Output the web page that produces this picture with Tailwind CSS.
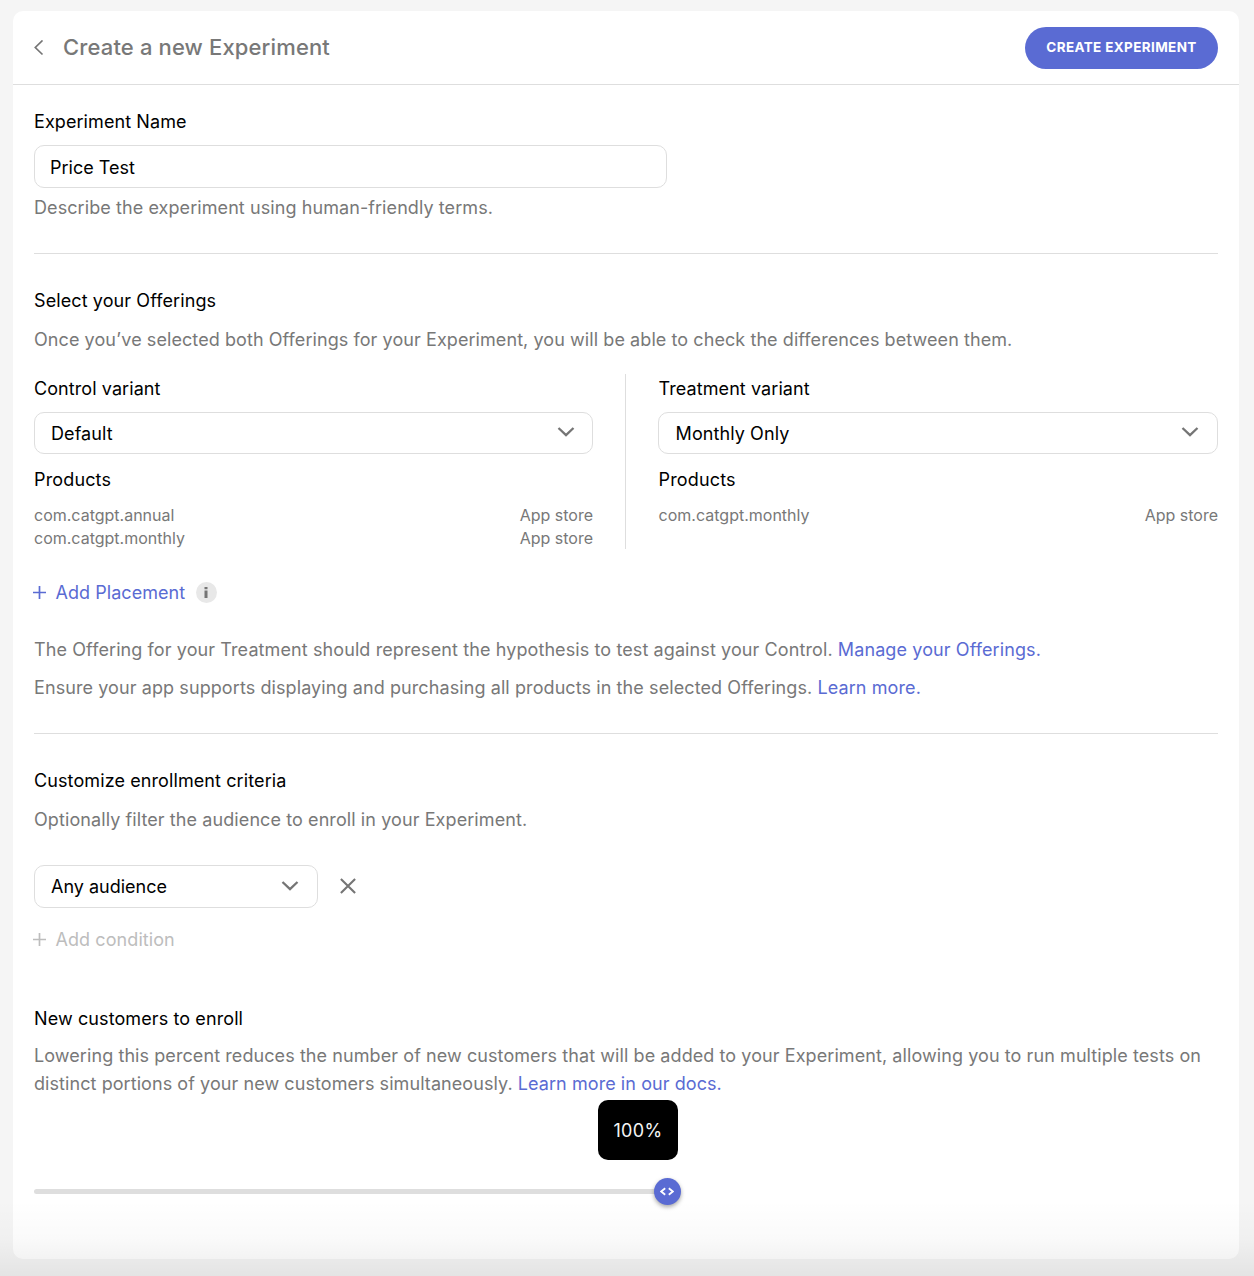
<!DOCTYPE html>
<html lang="en">
<head>
<meta charset="utf-8">
<title>Create a new Experiment</title>
<script src="https://cdn.jsdelivr.net/npm/@tailwindcss/browser@4"></script>
</head>
<body class="relative h-[1276px] overflow-hidden bg-[#f5f5f5] px-[13px] pt-[11px] font-['Inter',sans-serif] text-[18px] leading-7 tracking-[0.08px] text-black">
<main class="mr-[2px] h-[1248px] rounded-[10px] bg-white">
  <header class="flex h-[74px] items-center border-b border-[#dedede] px-[21px]">
    <svg class="mr-[19px] h-4 w-[10px]" viewBox="0 0 10 16" fill="none" stroke="#757575" stroke-width="1.7"><path d="M8.5 .5 1.3 7.500l7.200 7"/></svg>
    <h1 class="flex-1 whitespace-nowrap pb-[2px] text-[22px] font-medium tracking-[0.14px] text-[#787878]">Create a new Experiment</h1>
    <button class="h-[42px] w-[193px] whitespace-nowrap rounded-full bg-[#5a6bd3] pb-[2px] text-[13.5px] font-bold tracking-[0.36px] text-white">CREATE EXPERIMENT</button>
  </header>
  <div class="px-[21px]">
    <section class="h-[169px] border-b border-[#dedede] pt-[23px]">
      <label class="block">Experiment Name</label>
      <div class="mt-[9px] flex h-[43px] w-[633px] items-center rounded-[10px] border border-[#dedede] px-[15px] pt-[2px] tracking-normal">Price Test</div>
      <p class="mt-[6px] text-[#787878]">Describe the experiment using human-friendly terms.</p>
    </section>

    <section class="h-[480px] border-b border-[#dedede] pt-[33px]">
      <h2 class="tracking-[0.1px]">Select your Offerings</h2>
      <p class="mt-[11px] whitespace-nowrap tracking-[0.075px] text-[#787878]">Once you’ve selected both Offerings for your Experiment, you will be able to check the differences between them.</p>
      <div class="mt-[20px] flex h-[175px]">
        <div class="w-[592px] border-r border-[#dedede] pr-[32px] pt-[1px]">
          <h3>Control variant</h3>
          <div class="mt-[9px] flex h-[42px] items-center justify-between rounded-[10px] border border-[#dedede] px-4 pt-[2px]">Default
            <svg class="-mt-[4px] mr-[1px] h-[10px] w-[18px]" viewBox="0 0 18 10" fill="none" stroke="#757575" stroke-width="2.3"><path d="m1.5 1 7.5 7.2L16.5 1"/></svg>
          </div>
          <h3 class="mt-[12px] tracking-[0.15px]">Products</h3>
          <div class="mt-[10px] text-[16px] leading-[23px] tracking-normal text-[#787878]">
            <div class="flex justify-between"><span>com.catgpt.annual</span><span>App store</span></div>
            <div class="flex justify-between"><span>com.catgpt.monthly</span><span>App store</span></div>
          </div>
        </div>
        <div class="flex-1 pl-[32px] pt-[1px]">
          <h3 class="pl-[0.6px]">Treatment variant</h3>
          <div class="mt-[9px] flex h-[42px] items-center justify-between rounded-[10px] border border-[#dedede] pl-[16.6px] pr-4 pt-[2px]">Monthly Only
            <svg class="-mt-[4px] mr-[2px] h-[10px] w-[18px]" viewBox="0 0 18 10" fill="none" stroke="#757575" stroke-width="2.3"><path d="m1.5 1 7.5 7.2L16.5 1"/></svg>
          </div>
          <h3 class="mt-[12px] pl-[0.6px] tracking-[0.15px]">Products</h3>
          <div class="mt-[10px] flex justify-between pl-[0.6px] text-[16px] leading-[23px] tracking-normal text-[#787878]"><span>com.catgpt.monthly</span><span>App store</span></div>
        </div>
      </div>
      <div class="mt-[30px] flex h-7 items-center text-[#5a6bd3]">
        <svg class="-ml-[1px] -mt-[2px] mr-[9.5px] h-[13px] w-[13px]" viewBox="0 0 13 13" fill="none" stroke="#5a6bd3" stroke-width="1.7"><path d="M6.5 0v13M0 6.5h13"/></svg>
        <span class="tracking-[0.05px]">Add Placement</span>
        <span class="-mt-[1px] ml-[10.5px] flex size-[21px] items-center justify-center rounded-full bg-[#e8e8e8]">
          <svg class="h-[11px] w-[4px]" viewBox="0 0 4 11" fill="#757575"><path d="M.5 0h3v2.2h-3zM.5 3.5h3V11h-3z"/></svg>
        </span>
      </div>
      <p class="mt-[29px] whitespace-nowrap tracking-[0.1px] text-[#787878]">The Offering for your Treatment should represent the hypothesis to test against your Control. <a class="text-[#5a6bd3]">Manage your Offerings.</a></p>
      <p class="mt-[10px] whitespace-nowrap tracking-[0.09px] text-[#787878]">Ensure your app supports displaying and purchasing all products in the selected Offerings. <a class="text-[#5a6bd3]">Learn more.</a></p>
    </section>

    <section class="pt-[33px]">
      <h2 class="tracking-[0.1px]">Customize enrollment criteria</h2>
      <p class="mt-[11px] tracking-[0.09px] text-[#787878]">Optionally filter the audience to enroll in your Experiment.</p>
      <div class="mt-[31px] flex items-center">
        <div class="flex h-[43px] w-[284px] items-center justify-between rounded-[10px] border border-[#dedede] px-4 tracking-normal">Any audience
          <svg class="-mt-[2px] mr-[2px] h-[10px] w-[18px]" viewBox="0 0 18 10" fill="none" stroke="#757575" stroke-width="2.3"><path d="m1.5 1 7.5 7.2L16.5 1"/></svg>
        </div>
        <svg class="-mt-[2px] ml-[22px] size-4" viewBox="0 0 16 16" fill="none" stroke="#757575" stroke-width="2.1"><path d="m.9.9 14.2 14.2M15.1.9.9 15.1"/></svg>
      </div>
      <div class="mt-[18px] flex h-7 items-center text-[#bdbdbd]">
        <svg class="-ml-[1px] -mt-[1px] mr-[9.5px] h-[13px] w-[13px]" viewBox="0 0 13 13" fill="none" stroke="#bdbdbd" stroke-width="1.7"><path d="M6.5 0v13M0 6.5h13"/></svg>
        <span>Add condition</span>
      </div>
      <h2 class="mt-[51px] tracking-[0.1px]">New customers to enroll</h2>
      <p class="mt-[9px] whitespace-nowrap text-[#787878]">Lowering this percent reduces the number of new customers that will be added to your Experiment, allowing you to run multiple tests on<br><span class="tracking-[0.07px]">distinct portions of your new customers simultaneously. <a class="text-[#5a6bd3]">Learn more in our docs.</a></span></p>
      <div class="mt-[2px] ml-[564px] flex h-[60px] w-20 items-center justify-center rounded-[10px] bg-black pt-[2px] tracking-[0.35px] text-[#f5f5f5]">100%</div>
      <div class="relative mt-[29px] h-[5px] w-[633px] rounded-full bg-[#dedede]">
        <div class="absolute -right-[13.5px] -top-[11px] flex size-[27px] items-center justify-center rounded-full bg-[#5a6bd3] shadow-[0_2px_4px_rgba(0,0,0,0.35)]">
          <svg class="h-[9px] w-[14px]" viewBox="0 0 14 9" fill="none" stroke="#fff" stroke-width="1.8"><path d="M5.2 1.2 1.2 4.5l4 3.3M8.8 1.2l4 3.3-4 3.3"/></svg>
        </div>
      </div>
    </section>
  </div>
</main>
<div class="pointer-events-none absolute inset-x-0 bottom-0 h-[76px] bg-linear-to-b from-black/0 via-black/2 to-black/7"></div>
</body>
</html>
